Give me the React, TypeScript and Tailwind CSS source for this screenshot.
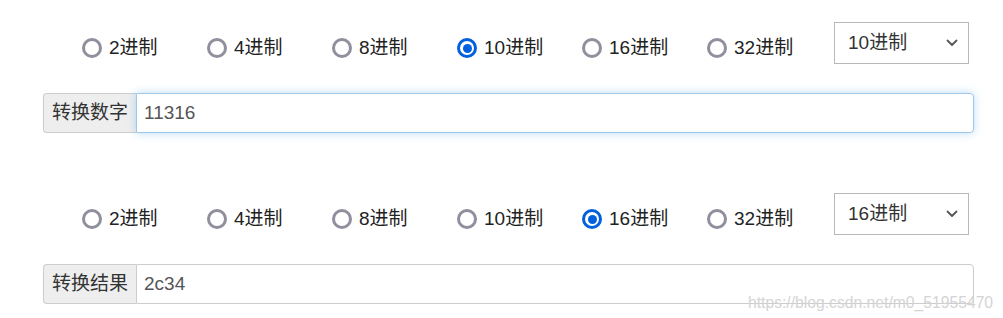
import React, { useState } from 'react';

const BASES = [2, 4, 8, 10, 16, 32];

const Radio: React.FC<{ label: string; checked: boolean; onClick: () => void }> = ({ label, checked, onClick }) => (
  <label className="w-[125px] flex items-center gap-[7px] cursor-pointer" onClick={onClick}>
    {checked ? (
      <span className="w-[20px] h-[20px] rounded-full border-[3px] border-[#0060df] flex items-center justify-center">
        <span className="w-[9px] h-[9px] rounded-full bg-[#0060df]" />
      </span>
    ) : (
      <span className="w-[20px] h-[20px] rounded-full border-[3px] border-[#8f8f9d] bg-white" />
    )}
    <span className="text-[19px] text-[#222]">{label}</span>
  </label>
);

const BaseSelect: React.FC<{ value: number }> = ({ value }) => (
  <div className="w-[135px] h-[42px] border border-[#b8b8b8] bg-white flex items-center justify-between pl-[13px] pr-[10px]">
    <span className="text-[19px] text-[#333]">{value}进制</span>
    <svg width="12" height="8" viewBox="0 0 12 8" fill="none">
      <path d="M1.5 1.5 6 6l4.5-4.5" stroke="#555" strokeWidth="1.8" strokeLinecap="round" strokeLinejoin="round" />
    </svg>
  </div>
);

const Section: React.FC<{
  base: number;
  setBase: (b: number) => void;
  label: string;
  value: string;
  focused?: boolean;
}> = ({ base, setBase, label, value, focused }) => (
  <div>
    <div className="flex items-center h-[42px]">
      <div className="flex items-center pl-[82px] pt-[10px] w-[834px]">
        {BASES.map((b) => (
          <Radio key={b} label={`${b}进制`} checked={b === base} onClick={() => setBase(b)} />
        ))}
      </div>
      <BaseSelect value={base} />
    </div>
    <div className="mt-[29px] ml-[43px] w-[931px] h-[40px] flex">
      <div className="h-full px-[8px] flex items-center bg-[#eee] border border-[#ccc] border-r-0 rounded-l-[4px] text-[19px] text-[#333]">
        {label}
      </div>
      <div
        className={`flex-1 h-full flex items-center px-[7px] bg-white border rounded-r-[4px] text-[19px] text-[#555] ${
          focused ? 'border-[#9ec8ea] shadow-[0_0_8px_rgba(102,175,233,0.45)]' : 'border-[#ccc]'
        }`}
      >
        {value}
      </div>
    </div>
  </div>
);

export default function App() {
  const [fromBase, setFromBase] = useState(10);
  const [toBase, setToBase] = useState(16);
  const num = '11316';
  const parsed = parseInt(num, fromBase);
  const result = isNaN(parsed) ? '' : parsed.toString(toBase);

  return (
    <div
      className="relative w-[1003px] h-[318px] bg-white overflow-hidden pt-[22px]"
      style={{ fontFamily: '"Liberation Sans", Arial, "Noto Sans CJK SC", sans-serif' }}
    >
      <Section base={fromBase} setBase={setFromBase} label="转换数字" value={num} focused />
      <div className="mt-[60px]">
        <Section base={toBase} setBase={setToBase} label="转换结果" value={result} />
      </div>
      {/* watermark */}
      <div className="absolute left-[748px] top-[291px] text-[15.7px] text-[#d4d4d4]">
        https://blog.csdn.net/m0_51955470
      </div>
    </div>
  );
}
